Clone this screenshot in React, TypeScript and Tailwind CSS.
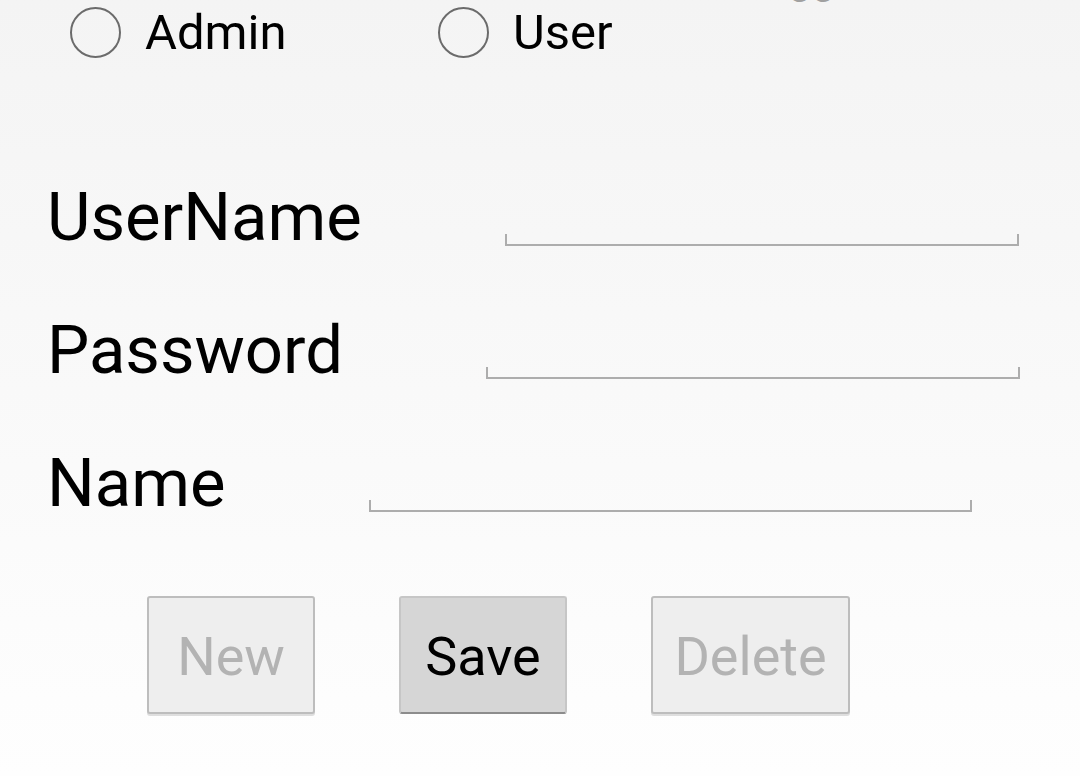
import React from 'react';

function Radio({ label }: { label: string }) {
    return (
        <div className="flex items-center gap-[24px]">
            <div className="w-[51px] h-[51px] rounded-full border-2 border-[#6b6b6b]" />
            <span className="text-[49px] leading-none text-black">{label}</span>
        </div>
    );
}

function Field({ label, width }: { label: string; width: string }) {
    return (
        <div className="flex items-start h-[66px]">
            <span className="text-[67px] leading-none text-black">{label}</span>
            <div
                className={`ml-[143px] mt-[50px] h-[12px] border-x-2 border-b-2 border-[#adadad] ${width}`}
            />
        </div>
    );
}

function Button({
    label,
    enabled,
    width,
}: {
    label: string;
    enabled?: boolean;
    width: string;
}) {
    return (
        <div
            className={
                enabled
                    ? `h-[118px] ${width} flex items-center justify-center pt-1 rounded-[3px] border-2 border-[#c6c6c6] border-b-[#8c8c8c] bg-[#d6d6d6] text-[54px] leading-none text-black`
                    : `h-[118px] ${width} flex items-center justify-center pt-1 rounded-[3px] border-2 border-[#bdbdbd] bg-[#eeeeee] shadow-[0_2px_0_#dedede] text-[54px] leading-none text-[#b3b3b3]`
            }
        >
            {label}
        </div>
    );
}

export default function App() {
    return (
        <div
            className="w-[1080px] h-[776px] overflow-hidden bg-gradient-to-b from-[#f4f4f4] to-[#fefefe]"
            style={{ fontFamily: 'Roboto, "Noto Sans", sans-serif' }}
        >
            <div className="h-[3px] overflow-hidden pl-[788px]">
                <div className="-mt-[42px] text-[42px] leading-none text-[#a0a0a0]">gg</div>
            </div>

            <div className="flex items-center mt-[4px] ml-[70px]">
                <div className="w-[368px]">
                    <Radio label="Admin" />
                </div>
                <Radio label="User" />
            </div>

            <div className="flex flex-col gap-[67px] mt-[126px] ml-[47px]">
                <Field label="UserName" width="w-[514px]" />
                <Field label="Password" width="w-[534px]" />
                <Field label="Name" width="w-[603px]" />
            </div>

            <div className="flex gap-[84px] mt-[80px] ml-[147px]">
                <Button label="New" width="w-[168px]" />
                <Button label="Save" enabled width="w-[168px]" />
                <Button label="Delete" width="w-[199px]" />
            </div>
        </div>
    );
}
